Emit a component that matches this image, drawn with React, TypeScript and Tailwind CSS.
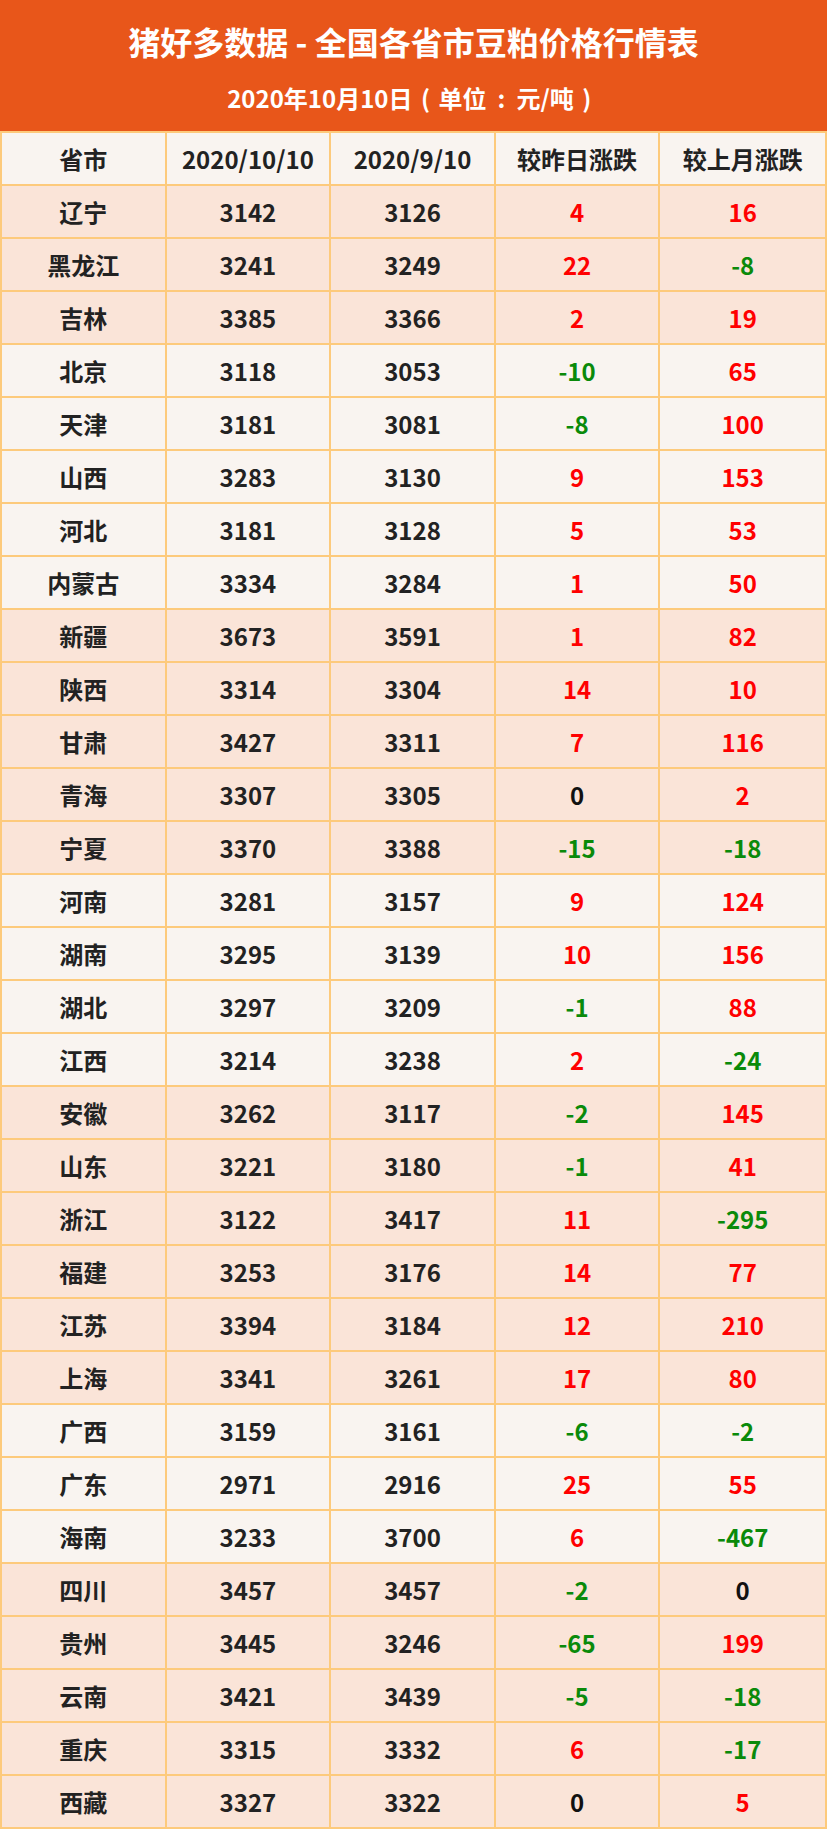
const rows: [string, number, number, number, number, boolean][] = [
  ['辽宁', 3142, 3126, 4, 16, true],
  ['黑龙江', 3241, 3249, 22, -8, true],
  ['吉林', 3385, 3366, 2, 19, true],
  ['北京', 3118, 3053, -10, 65, false],
  ['天津', 3181, 3081, -8, 100, false],
  ['山西', 3283, 3130, 9, 153, false],
  ['河北', 3181, 3128, 5, 53, false],
  ['内蒙古', 3334, 3284, 1, 50, false],
  ['新疆', 3673, 3591, 1, 82, true],
  ['陕西', 3314, 3304, 14, 10, true],
  ['甘肃', 3427, 3311, 7, 116, true],
  ['青海', 3307, 3305, 0, 2, true],
  ['宁夏', 3370, 3388, -15, -18, true],
  ['河南', 3281, 3157, 9, 124, false],
  ['湖南', 3295, 3139, 10, 156, false],
  ['湖北', 3297, 3209, -1, 88, false],
  ['江西', 3214, 3238, 2, -24, false],
  ['安徽', 3262, 3117, -2, 145, true],
  ['山东', 3221, 3180, -1, 41, true],
  ['浙江', 3122, 3417, 11, -295, true],
  ['福建', 3253, 3176, 14, 77, true],
  ['江苏', 3394, 3184, 12, 210, true],
  ['上海', 3341, 3261, 17, 80, true],
  ['广西', 3159, 3161, -6, -2, false],
  ['广东', 2971, 2916, 25, 55, false],
  ['海南', 3233, 3700, 6, -467, false],
  ['四川', 3457, 3457, -2, 0, true],
  ['贵州', 3445, 3246, -65, 199, true],
  ['云南', 3421, 3439, -5, -18, true],
  ['重庆', 3315, 3332, 6, -17, true],
  ['西藏', 3327, 3322, 0, 5, true],
];

const cell = 'flex items-center justify-center border-r-2 border-[#fdca7c] last:border-r-0';

function changeColor(v: number) {
  if (v > 0) return 'text-[#ff0000]';
  if (v < 0) return 'text-[#0a8a0a]';
  return 'text-[#111111]';
}

export default function App() {
  return (
    <div
      className="w-[827px] bg-white"
      style={{ fontFamily: '"Noto Sans CJK SC", "Noto Sans", sans-serif' }}
    >
      {/* Title banner */}
      <div className="h-[131px] bg-[#e8561a] flex flex-col items-center text-white font-bold">
        <div className="mt-[17px] text-[32px] leading-[48px]">猪好多数据 - 全国各省市豆粕价格行情表</div>
        <div className="mt-[18px] flex items-center text-[24px] leading-[30px] whitespace-nowrap">
          <span>2020年10月10日</span>
          <span className="w-[26px] text-center">(</span>
          <span>单位</span>
          <span className="w-[30px] text-center">:</span>
          <span>元/吨</span>
          <span className="w-[26px] text-center">)</span>
        </div>
      </div>

      {/* Table */}
      <div className="border-x-2 border-t-2 border-[#fdca7c] font-bold text-[24px] text-[#222222]">
        <div className="grid grid-cols-5 h-[53px] bg-[#f9f4f0] border-b-2 border-[#fdca7c]">
          <div className={cell}>省市</div>
          <div className={cell}>2020/10/10</div>
          <div className={cell}>2020/9/10</div>
          <div className={cell}>较昨日涨跌</div>
          <div className={cell}>较上月涨跌</div>
        </div>
        {rows.map(([name, cur, prev, day, month, peach]) => (
          <div
            key={name}
            className={`grid grid-cols-5 h-[53px] border-b-2 border-[#fdca7c] ${peach ? 'bg-[#fae4d8]' : 'bg-[#f9f4f0]'}`}
          >
            <div className={cell}>{name}</div>
            <div className={cell}>{cur}</div>
            <div className={cell}>{prev}</div>
            <div className={`${cell} ${changeColor(day)}`}>{day}</div>
            <div className={`${cell} ${changeColor(month)}`}>{month}</div>
          </div>
        ))}
      </div>
    </div>
  );
}
